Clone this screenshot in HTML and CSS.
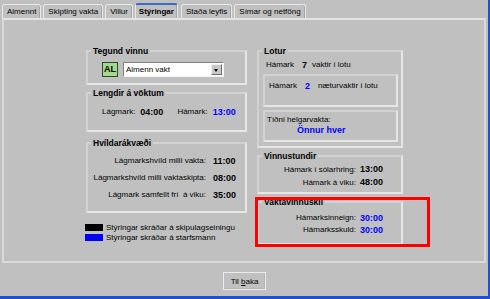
FILE: index.html
```html
<!DOCTYPE html>
<html>
<head>
  <meta charset="UTF-8">
  <title>Stýringar</title>
  <link rel="stylesheet" href="styles.css">
</head>
<body>
  <div class="window">
    <div class="tabs">
      <span class="tab">Almennt</span>
      <span class="tab">Skipting vakta</span>
      <span class="tab">Villur</span>
      <span class="tab active">Stýringar</span>
      <span class="tab">Staða leyfis</span>
      <span class="tab">Símar og netföng</span>
    </div>

    <div class="panel">
      <div class="cols">
        <div class="col col-left">
          <fieldset class="grp grp-type">
            <legend>Tegund vinnu</legend>
            <div class="type-row">
              <span class="al">AL</span>
              <div class="select">
                <span>Almenn vakt</span>
                <span class="arrow"></span>
              </div>
            </div>
          </fieldset>

          <fieldset class="grp grp-len">
            <legend>Lengdir á vöktum</legend>
            <div class="len-row">
              <span>Lágmark:</span>
              <b class="val">04:00</b>
              <span class="len-max">Hámark:</span>
              <b class="val blue">13:00</b>
            </div>
          </fieldset>

          <fieldset class="grp grp-rest">
            <legend>Hvíldarákvæði</legend>
            <div class="pairs rest-pairs">
              <span>Lágmarkshvíld milli vakta:</span><b class="val">11:00</b>
              <span>Lágmarkshvíld milli vaktaskipta:</span><b class="val">08:00</b>
              <span>Lágmark samfellt frí&nbsp; á viku:</span><b class="val">35:00</b>
            </div>
          </fieldset>

          <div class="key">
            <div class="key-row"><span class="swatch black"></span>Stýringar skráðar á skipulagseiningu</div>
            <div class="key-row"><span class="swatch bluebox"></span>Stýringar skráðar á starfsmann</div>
          </div>
        </div>

        <div class="col col-right">
          <fieldset class="grp grp-lotur">
            <legend>Lotur</legend>
            <div class="lotur-row">
              <span>Hámark</span><b class="num">7</b><span>vaktir í lotu</span>
            </div>
            <div class="inner inner-night">
              <span>Hámark</span><b class="num blue">2</b><span>næturvaktir í lotu</span>
            </div>
            <div class="inner inner-weekend">
              <div>Tíðni helgarvakta:</div>
              <b class="blue weekend-val">Önnur hver</b>
            </div>
          </fieldset>

          <fieldset class="grp grp-hours">
            <legend>Vinnustundir</legend>
            <div class="pairs right-pairs">
              <span>Hámark í sólarhring:</span><b class="val">13:00</b>
              <span>Hámark á viku:</span><b class="val">48:00</b>
            </div>
          </fieldset>

          <fieldset class="grp grp-shift">
            <legend>Vaktavinnuskil</legend>
            <div class="pairs right-pairs">
              <span>Hámarksinneign:</span><b class="val blue">30:00</b>
              <span>Hámarksskuld:</span><b class="val blue">30:00</b>
            </div>
          </fieldset>
        </div>
      </div>

      <div class="highlight"></div>
    </div>

    <div class="footer">
      <button class="btn">Til <u>b</u>aka</button>
    </div>
  </div>
</body>
</html>
```

FILE: styles.css
```css
body {
  margin: 0;
  background: #c0c0c0;
  font-family: "Liberation Sans", Arial, sans-serif;
  font-size: 8px;
  color: #000;
  overflow: hidden;
}

.window {
  width: 488px;
  height: 296px;
  border-right: 2px solid #1f4fd4;
  border-bottom: 3px solid #1f4fd4;
  display: flex;
  flex-direction: column;
}

/* tabs */

.tabs {
  display: flex;
  align-items: flex-end;
  height: 18px;
  padding-left: 2px;
}

.tab {
  height: 13px;
  line-height: 13px;
  padding: 0 4px;
  margin-right: 2px;
  border: 1px solid #e8e8e8;
  border-bottom: none;
  border-radius: 3px 3px 0 0;
  box-shadow: inset -1px 0 #a4a4a4;
  white-space: nowrap;
}

.tab.active {
  font-weight: bold;
  border-top: 2px solid #3b6ccb;
  padding: 0 3px;
  margin-right: 3px;
}

/* panel */

.panel {
  position: relative;
  height: 245px;
  margin: 0 2px;
  border: 2px solid #dadada;
  border-top-color: #e4e4e4;
  box-sizing: border-box;
}

.cols {
  display: flex;
  gap: 10px;
  padding: 26px 0 0 82px;
}

.col-left {
  width: 161px;
}

.col-right {
  width: 146px;
}

.grp {
  margin: 0;
  padding: 0;
  border: 2px solid;
  border-color: #d2d2d2 #e6e6e6 #e6e6e6 #d2d2d2;
  box-sizing: border-box;
  min-width: 0;
}

.grp legend {
  padding: 0 2px;
  margin-left: 3px;
  font-weight: bold;
  font-size: 8.5px;
  line-height: 10px;
}

.val {
  font-size: 9px;
  font-weight: bold;
}

.blue {
  color: #0000ff;
}

/* left column */

.grp-type {
  height: 39px;
}

.type-row {
  display: flex;
  align-items: center;
  gap: 5px;
  padding: 6px 0 0 14px;
}

.al {
  width: 16px;
  height: 15px;
  box-sizing: border-box;
  border: 1px solid #2c4a2c;
  background: #a6d78e;
  font-weight: bold;
  font-size: 9px;
  line-height: 13px;
  text-align: center;
}

.select {
  width: 101px;
  height: 15px;
  box-sizing: border-box;
  border: 1px solid;
  border-color: #808080 #f4f4f4 #f4f4f4 #808080;
  background: #fff;
  display: flex;
  align-items: center;
  justify-content: space-between;
  padding-left: 2px;
}

.arrow {
  width: 11px;
  height: 11px;
  margin-right: 1px;
  box-sizing: border-box;
  background: #c8c8c8;
  border: 1px solid;
  border-color: #f0f0f0 #707070 #707070 #f0f0f0;
  position: relative;
}

.arrow::after {
  content: "";
  position: absolute;
  left: 2px;
  top: 4px;
  border-left: 2.5px solid transparent;
  border-right: 2.5px solid transparent;
  border-top: 3px solid #000;
}

.grp-len {
  height: 44px;
  margin-top: 3px;
}

.len-row {
  display: flex;
  align-items: center;
  padding: 8px 0 0 14px;
  line-height: 12px;
}

.len-row .val {
  margin-left: 5px;
}

.len-max {
  margin-left: 14px;
}

.grp-rest {
  height: 75px;
  margin-top: 6px;
}

.pairs {
  display: grid;
  align-items: center;
}

.pairs span {
  text-align: right;
}

.rest-pairs {
  grid-template-columns: 118px auto;
  column-gap: 7px;
  row-gap: 5px;
  padding-top: 7px;
  line-height: 12px;
}

.key {
  margin: 9px 0 0 -1px;
}

.key-row {
  display: flex;
  align-items: center;
  height: 10px;
  white-space: nowrap;
}

.swatch {
  width: 18px;
  height: 7px;
  margin-right: 3px;
}

.swatch.black {
  background: #000;
}

.swatch.bluebox {
  background: #0000ff;
}

/* right column */

.grp-lotur {
  height: 102px;
  padding: 0 3px 0 4px;
}

.grp-lotur legend {
  margin-left: -1px;
}

.lotur-row {
  display: flex;
  align-items: center;
  padding: 3px 0 0 3px;
  line-height: 12px;
}

.num {
  font-size: 9px;
  margin: 0 5px 0 8px;
}

.inner {
  border: 2px solid;
  border-color: #d2d2d2 #e6e6e6 #e6e6e6 #d2d2d2;
  box-sizing: border-box;
}

.inner-night {
  display: flex;
  align-items: flex-start;
  height: 33px;
  margin-top: 3px;
  padding: 4px 0 0 4px;
  line-height: 12px;
}

.inner-night .num {
  margin: 0 8px;
}

.inner-weekend {
  height: 32px;
  margin-top: 3px;
  padding: 2px 0 0 2px;
  line-height: 11px;
}

.weekend-val {
  display: block;
  font-size: 9px;
  padding-left: 30px;
}

.grp-hours {
  height: 43px;
  margin-top: 3px;
}

.right-pairs {
  grid-template-columns: 97px auto;
  column-gap: 4px;
  line-height: 13px;
  padding-top: 2px;
}

.grp-shift {
  height: 48px;
  margin-top: 3px;
}

.grp-shift .right-pairs {
  padding-top: 5px;
  line-height: 12px;
}

.highlight {
  position: absolute;
  left: 251px;
  top: 177px;
  width: 175px;
  height: 50px;
  box-sizing: border-box;
  border: 3px solid #ff0000;
}

/* footer */

.footer {
  flex: 1;
  display: flex;
  justify-content: center;
  padding-top: 9px;
}

.btn {
  width: 43px;
  height: 18px;
  margin-left: 1px;
  padding: 0;
  background: #c0c0c0;
  border: 1px solid #ececec;
  box-shadow: inset -1px -1px #b4b4b4;
  font-family: "Liberation Sans", Arial, sans-serif;
  font-size: 8px;
  color: #000;
}
```
